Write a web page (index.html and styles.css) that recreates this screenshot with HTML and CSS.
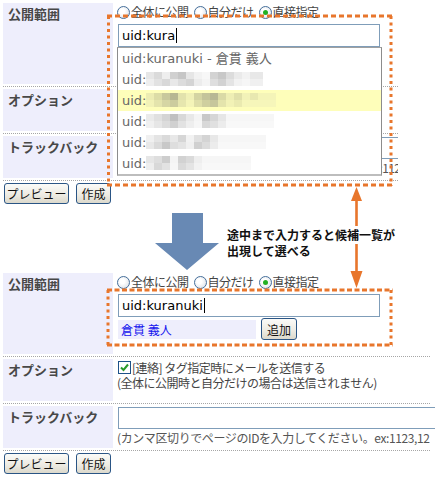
FILE: index.html
```html
<!DOCTYPE html>
<html lang="ja">
<head>
<meta charset="utf-8">
<title>公開範囲</title>
<link rel="stylesheet" href="styles.css">
</head>
<body>
<div class="page">

  <div class="form form-top">
    <div class="row row-scope">
      <div class="label">公開範囲</div>
      <div class="cell">
        <div class="radios">
          <span class="radio"></span><span class="rtext">全体に公開</span>
          <span class="radio"></span><span class="rtext">自分だけ</span>
          <span class="radio on"></span><span class="rtext">直接指定</span>
        </div>
        <div class="textbox"><span>uid:kura</span><span class="caret"></span></div>
        <div class="namerow covered"><span class="name name-empty"></span><button class="btn btn-add">追加</button></div>
      </div>
    </div>
    <div class="sep"></div>
    <div class="row row-opt">
      <div class="label">オプション</div>
      <div class="cell covered">
        <div class="check-line"><span class="checkbox"><svg viewBox="0 0 11 11" width="11" height="11"><path d="M2 5.5 L4.5 8 L9 2.5" fill="none" stroke="#2a9a2a" stroke-width="2"/></svg></span><span class="opt-text">[連絡] タグ指定時にメールを送信する</span></div>
        <div class="opt-text">(全体に公開時と自分だけの場合は送信されません)</div>
      </div>
    </div>
    <div class="sep"></div>
    <div class="row row-tb">
      <div class="label">トラックバック</div>
      <div class="cell">
        <div class="textbox wide"></div>
        <div class="hint hint-top">(カンマ区切りでページのIDを入力してください。ex:1123,12</div>
      </div>
    </div>
    <div class="sep"></div>
    <div class="buttons">
      <button class="btn btn-preview">プレビュー</button>
      <button class="btn btn-create">作成</button>
    </div>
  </div>

  <div class="middle">
    <svg class="bigarrow" width="66" height="58" viewBox="0 0 66 58">
      <polygon points="18,0 49,0 49,30 65,30 33,57 1,30 18,30" fill="#6889b4"/>
    </svg>
    <p class="note">途中まで入力すると候補一覧が<br>出現して選べる</p>
  </div>

  <div class="form form-bottom">
    <div class="row row-scope">
      <div class="label">公開範囲</div>
      <div class="cell">
        <div class="radios">
          <span class="radio"></span><span class="rtext">全体に公開</span>
          <span class="radio"></span><span class="rtext">自分だけ</span>
          <span class="radio on"></span><span class="rtext">直接指定</span>
        </div>
        <div class="textbox"><span>uid:kuranuki</span><span class="caret"></span></div>
        <div class="namerow"><span class="name">倉貫 義人</span><button class="btn btn-add">追加</button></div>
      </div>
    </div>
    <div class="sep"></div>
    <div class="row row-opt">
      <div class="label">オプション</div>
      <div class="cell">
        <div class="check-line"><span class="checkbox"><svg viewBox="0 0 11 11" width="11" height="11"><path d="M2 5.5 L4.5 8 L9 2.5" fill="none" stroke="#2a9a2a" stroke-width="2"/></svg></span><span class="opt-text">[連絡] タグ指定時にメールを送信する</span></div>
        <div class="opt-text">(全体に公開時と自分だけの場合は送信されません)</div>
      </div>
    </div>
    <div class="sep"></div>
    <div class="row row-tb">
      <div class="label">トラックバック</div>
      <div class="cell">
        <div class="textbox wide"></div>
        <div class="hint">(カンマ区切りでページのIDを入力してください。ex:1123,12</div>
      </div>
    </div>
    <div class="sep"></div>
    <div class="buttons">
      <button class="btn btn-preview">プレビュー</button>
      <button class="btn btn-create">作成</button>
    </div>
  </div>

  <ul class="suggest">
    <li>uid:kuranuki - 倉貫 義人</li>
    <li>uid:<span class="mz mz-1"></span></li>
    <li class="hl">uid:<span class="mz mz-y"></span></li>
    <li>uid:<span class="mz mz-2"></span></li>
    <li>uid:<span class="mz mz-3"></span></li>
    <li>uid:<span class="mz mz-4"></span></li>
  </ul>

  <svg class="annot" width="435" height="480" viewBox="0 0 435 480">
    <g stroke="#e8762c" stroke-width="3" fill="none">
      <line x1="107" y1="16" x2="392.5" y2="16" stroke-dasharray="5 3"/>
      <line x1="107" y1="185" x2="392.5" y2="185" stroke-dasharray="5 3"/>
      <line x1="108.5" y1="16" x2="108.5" y2="186" stroke-dasharray="3 3.5"/>
      <line x1="391" y1="16" x2="391" y2="186" stroke-dasharray="3 3.5"/>
      <line x1="107" y1="290" x2="392.5" y2="290" stroke-dasharray="5 2.5"/>
      <line x1="107" y1="345" x2="392.5" y2="345" stroke-dasharray="5 2.5"/>
      <line x1="108" y1="290" x2="108" y2="346" stroke-dasharray="3 3.5"/>
      <line x1="391" y1="290" x2="391" y2="346" stroke-dasharray="3 3.5"/>
    </g>
    <g fill="#e8762c">
      <rect x="355.2" y="198" width="2.6" height="28"/>
      <rect x="355.2" y="244" width="2.6" height="28"/>
      <polygon points="351,201 356.5,187 362,201"/>
      <polygon points="350.5,271 356.5,288 362.5,271"/>
    </g>
  </svg>

</div>
</body>
</html>
```

FILE: styles.css
```css
html, body {
  margin: 0;
  padding: 0;
  background: #ffffff;
  overflow: hidden;
}

body {
  font-family: "Noto Sans CJK JP", sans-serif;
  color: #444;
}

.page {
  position: relative;
  width: 435px;
  height: 480px;
  box-sizing: border-box;
  padding: 3px 0 0 3px;
}

.form-top {
  width: 395px;
  overflow: hidden;
}

.form-bottom {
  width: 427px;
}

.covered {
  visibility: hidden;
}

.row {
  display: flex;
  gap: 4px;
}

.row-scope {
  height: 81px;
}

.row-opt,
.row-tb {
  height: 42px;
}

.label {
  flex: 0 0 110px;
  box-sizing: border-box;
  background: #eeeefc;
  padding: 3px 5px 0;
  font-weight: 700;
  font-size: 13px;
  line-height: 16px;
  color: #484848;
  white-space: nowrap;
}

.cell {
  flex: 1;
  min-width: 0;
  font-size: 12px;
  color: #444;
}

.sep {
  border-top: 1px dotted #a6a6a6;
  margin: 2px 0;
}

/* radios */
.radios {
  display: flex;
  align-items: center;
  height: 16px;
  margin-top: 1px;
  font-size: 12px;
  line-height: 16px;
  letter-spacing: -0.5px;
  white-space: nowrap;
}

.radio {
  position: relative;
  flex: 0 0 13px;
  width: 13px;
  height: 13px;
  box-sizing: border-box;
  border-radius: 50%;
  border: 1px solid #456e9a;
  background: radial-gradient(circle at 40% 40%, #ffffff 25%, #d3dae2 100%);
  margin-right: 1px;
}

.radio.on::after {
  content: "";
  position: absolute;
  left: 3px;
  top: 3px;
  width: 5px;
  height: 5px;
  border-radius: 50%;
  background: #22b022;
}

.rtext {
  margin-right: 5px;
}

/* text boxes */
.textbox {
  width: 262px;
  height: 23px;
  box-sizing: border-box;
  margin: 4px 0 0 1px;
  border: 1px solid #7f9db9;
  padding: 0 3px;
  font: 13px/21px "DejaVu Sans", sans-serif;
  color: #000;
  white-space: nowrap;
  background: #fff;
}

.textbox.wide {
  width: 330px;
  height: 22px;
  margin-top: 1px;
}

.caret {
  display: inline-block;
  width: 1px;
  height: 15px;
  background: #000;
  vertical-align: -3px;
  margin-left: 1px;
}

.namerow {
  display: flex;
  align-items: center;
  gap: 5px;
  margin: 1px 0 0 1px;
}

.name {
  width: 138px;
  height: 19px;
  box-sizing: border-box;
  padding-left: 3px;
  background: #eeeefc;
  color: #1414ee;
  font-size: 12px;
  line-height: 19px;
  white-space: nowrap;
}

/* buttons */
.btn {
  height: 21px;
  box-sizing: border-box;
  border: 1px solid #2a5585;
  border-radius: 3px;
  background: linear-gradient(#fbfbf8, #eeece4 55%, #dcd9cc);
  font-family: "Noto Sans CJK JP", sans-serif;
  font-size: 12px;
  line-height: 19px;
  color: #111;
  padding: 0;
  text-align: center;
}

.btn-add {
  width: 36px;
  height: 22px;
}

.btn-preview {
  width: 65px;
}

.btn-create {
  width: 35px;
}

.buttons {
  display: flex;
  gap: 7px;
  margin-left: 1px;
}

/* options */
.check-line {
  display: flex;
  align-items: center;
}

.checkbox {
  flex: 0 0 13px;
  width: 13px;
  height: 13px;
  box-sizing: border-box;
  border: 1px solid #1d5289;
  background: #fff;
  margin: 0 1px 0 1px;
  display: flex;
}

.opt-text {
  font-size: 12px;
  line-height: 15px;
  letter-spacing: -0.5px;
  white-space: nowrap;
}

.row-opt .cell {
  padding-top: 1px;
}

.hint {
  margin-top: 1px;
  font-size: 12px;
  line-height: 16px;
  letter-spacing: -0.4px;
  color: #555;
  white-space: nowrap;
}

.hint-top {
  letter-spacing: -0.65px;
}

/* middle annotation */
.middle {
  display: flex;
  align-items: flex-start;
  height: 69px;
  padding-left: 151px;
}

.bigarrow {
  margin-top: 9px;
  flex: 0 0 auto;
}

.note {
  margin: 23px 0 0 7px;
  font-size: 12px;
  line-height: 16px;
  font-weight: 700;
  color: #111;
  white-space: nowrap;
}

/* suggestion dropdown */
.suggest {
  position: absolute;
  left: 117px;
  top: 47px;
  width: 265px;
  box-sizing: border-box;
  margin: 0;
  padding: 0;
  list-style: none;
  background: #fff;
  border: 1px solid #8c8c8c;
  border-top-color: #a0a0a0;
  border-bottom: 2px solid #bdbdbd;
}

.suggest li {
  height: 21px;
  padding-left: 4px;
  font: 13px/21px "DejaVu Sans", "Noto Sans CJK JP", sans-serif;
  color: #666;
  white-space: nowrap;
}

.suggest li.hl {
  background: #fefeba;
}

.mz {
  display: inline-block;
  height: 14px;
  vertical-align: -2px;
}

.mz-1 {
  width: 117px;
  background:
    linear-gradient(90deg, #e6e6e6 0 8px, #dadada 8px 16px, #eeeeee 16px 24px, #d0d0d0 24px 32px, #c6c6c6 32px 40px, #e6e6e6 40px 48px, #f2f2f2 48px 56px, #f7f7f7 56px 64px, #d3d3d3 64px 72px, #c8c8c8 72px 80px, #dcdcdc 80px 88px, #eaeaea 88px 96px, #f2f2f2 96px 104px, #e8e8e8 104px 117px) top / 100% 50% no-repeat,
    linear-gradient(90deg, #eeeeee 0 8px, #e2e2e2 8px 16px, #d8d8d8 16px 24px, #e8e8e8 24px 32px, #dcdcdc 32px 40px, #d4d4d4 40px 48px, #ececec 48px 56px, #f4f4f4 56px 64px, #dedede 64px 72px, #d2d2d2 72px 80px, #e4e4e4 80px 88px, #f2f2f2 88px 96px, #f6f6f6 96px 104px, #f0f0f0 104px 117px) bottom / 100% 50% no-repeat;
}

.mz-y {
  width: 130px;
  background:
    linear-gradient(90deg, #ececb2 0 8px, #dcdca6 8px 16px, #c8c89c 16px 24px, #b7b792 24px 32px, #e2e2ac 32px 40px, #f0f0b6 40px 48px, #d4d4a2 48px 56px, #c4c49a 56px 64px, #b8b894 64px 72px, #dadaa6 72px 80px, #eeeeb4 80px 88px, #e0e0aa 88px 96px, #f2f2b8 96px 104px, #e8e8b0 104px 112px, #f4f4b8 112px 130px) top / 100% 50% no-repeat,
    linear-gradient(90deg, #f2f2b6 0 8px, #e4e4ac 8px 16px, #d6d6a4 16px 24px, #cccc9e 24px 32px, #e6e6ae 32px 40px, #f4f4b8 40px 48px, #dedea8 48px 56px, #cfcf9f 56px 64px, #c6c69c 64px 72px, #e4e4ac 72px 80px, #f2f2b6 80px 88px, #eaeab0 88px 96px, #f6f6ba 96px 130px) bottom / 100% 50% no-repeat;
}

.mz-2 {
  width: 128px;
  background:
    linear-gradient(90deg, #eaeaea 0 8px, #e0e0e0 8px 16px, #d4d4d4 16px 24px, #c0c0c0 24px 32px, #d8d8d8 32px 40px, #e8e8e8 40px 48px, #f4f4f4 48px 56px, #c8c8c8 56px 64px, #d6d6d6 64px 72px, #e6e6e6 72px 80px, #f6f6f6 80px 128px) top / 100% 50% no-repeat,
    linear-gradient(90deg, #f0f0f0 0 8px, #e6e6e6 8px 16px, #dcdcdc 16px 24px, #d0d0d0 24px 32px, #e2e2e2 32px 40px, #eeeeee 40px 48px, #f6f6f6 48px 56px, #d8d8d8 56px 64px, #e0e0e0 64px 72px, #ececec 72px 80px, #f8f8f8 80px 128px) bottom / 100% 50% no-repeat;
}

.mz-3 {
  width: 120px;
  background:
    linear-gradient(90deg, #f0f0f0 0 8px, #e4e4e4 8px 16px, #dadada 16px 24px, #e8e8e8 24px 32px, #d6d6d6 32px 40px, #f2f2f2 40px 48px, #e0e0e0 48px 56px, #d4d4d4 56px 64px, #e8e8e8 64px 72px, #f6f6f6 72px 120px) top / 100% 50% no-repeat,
    linear-gradient(90deg, #e8e8e8 0 8px, #dadada 8px 16px, #c8c8c8 16px 24px, #dedede 24px 32px, #e4e4e4 32px 40px, #f0f0f0 40px 48px, #d0d0d0 48px 56px, #dcdcdc 56px 64px, #ececec 64px 72px, #f8f8f8 72px 120px) bottom / 100% 50% no-repeat;
}

.mz-4 {
  width: 105px;
  background:
    linear-gradient(90deg, #e6e6e6 0 8px, #dedede 8px 16px, #cdcdcd 16px 24px, #f4f4f4 24px 32px, #d2d2d2 32px 40px, #dadada 40px 48px, #eeeeee 48px 56px, #f6f6f6 56px 105px) top / 100% 50% no-repeat,
    linear-gradient(90deg, #eeeeee 0 8px, #d8d8d8 8px 16px, #e2e2e2 16px 24px, #f6f6f6 24px 32px, #dadada 32px 40px, #e4e4e4 40px 48px, #f2f2f2 48px 56px, #f8f8f8 56px 105px) bottom / 100% 50% no-repeat;
}

/* annotation overlay */
.annot {
  position: absolute;
  left: 0;
  top: 0;
  pointer-events: none;
}
```
